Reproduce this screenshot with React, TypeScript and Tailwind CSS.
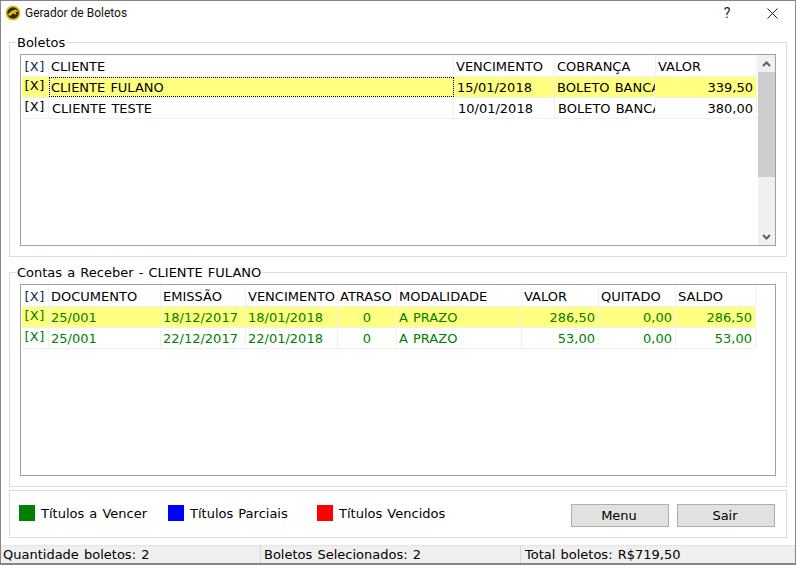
import React from "react";

const boletos = [
  { cliente: "CLIENTE FULANO", venc: "15/01/2018", cob: "BOLETO BANCÁRIO", valor: "339,50", selected: true },
  { cliente: "CLIENTE TESTE", venc: "10/01/2018", cob: "BOLETO BANCÁRIO", valor: "380,00", selected: false },
];

const contas = [
  { doc: "25/001", em: "18/12/2017", venc: "18/01/2018", atraso: "0", mod: "A PRAZO", valor: "286,50", quit: "0,00", saldo: "286,50", selected: true },
  { doc: "25/001", em: "22/12/2017", venc: "22/01/2018", atraso: "0", mod: "A PRAZO", valor: "53,00", quit: "0,00", saldo: "53,00", selected: false },
];

function Cell({ w, right, center, className, children }: any) {
  return (
    <div
      style={{ width: w }}
      className={`shrink-0 h-full overflow-hidden whitespace-nowrap border-r border-[#f0f0f0] ${right ? "text-right pr-[3px]" : center ? "text-center" : "pl-[2px]"} ${className || ""}`}
    >
      {children}
    </div>
  );
}

function Check({ head }: any) {
  return (
    <Cell w={27} center className={`pr-[1px] tracking-[0.4px] ${head ? "text-[#0b2a55]" : "leading-[18px]"}`}>
      [X]
    </Cell>
  );
}

function Group({ title, className, children }: any) {
  return (
    <div className={`relative mx-[8px] border border-[#dcdcdc] ${className}`}>
      {title && (
        <span className="absolute left-[6px] top-[-8px] bg-white px-[1px] leading-[16px] text-black">
          {title}
        </span>
      )}
      {children}
    </div>
  );
}

function Scrollbar() {
  return (
    <div className="ml-[1px] flex w-[17px] shrink-0 flex-col bg-[#f0f0f0]">
      <div className="flex h-[17px] items-center justify-center">
        <svg width="9" height="6" viewBox="0 0 9 6">
          <path d="M1 5 L4.5 1.5 L8 5" fill="none" stroke="#606060" strokeWidth="2" />
        </svg>
      </div>
      <div className="h-[105px] bg-[#cdcdcd]" />
      <div className="flex-1" />
      <div className="flex h-[17px] items-center justify-center">
        <svg width="9" height="6" viewBox="0 0 9 6">
          <path d="M1 1 L4.5 4.5 L8 1" fill="none" stroke="#606060" strokeWidth="2" />
        </svg>
      </div>
    </div>
  );
}

export default function App() {
  return (
    <div className="flex h-[565px] w-[796px] flex-col overflow-hidden border border-b-2 border-[#858585] bg-white font-['DejaVu_Sans','Verdana',sans-serif] text-[13px] leading-[21px] text-[#000] [word-spacing:1px]">
      <div className="flex h-[29px] shrink-0 items-center pb-[5px] font-['Roboto','Noto_Sans',sans-serif] text-[12px] [word-spacing:0px]">
        <svg className="ml-[4px]" width="16" height="16" viewBox="0 0 16 16">
          <circle cx="8" cy="8" r="7.5" fill="#e8b90f" />
          <circle cx="8" cy="8" r="5.8" fill="#2b2b22" />
          <path d="M2.5 9.5 L6.5 6 L10 4.5 L13.5 6 L10.5 7.5 L11.5 10 L8 8.5 L5 11 Z" fill="#e8b90f" />
        </svg>
        <span className="ml-[4px] text-[#111]">Gerador de Boletos</span>
        <span className="ml-auto w-[14px] text-center text-[14px] text-[#222]">?</span>
        <svg className="ml-[33px] mr-[17px]" width="11" height="11" viewBox="0 0 11 11">
          <path d="M0.5 0.5 L10.5 10.5 M10.5 0.5 L0.5 10.5" stroke="#222" strokeWidth="1" />
        </svg>
      </div>

      <Group title="Boletos" className="mt-[12px] h-[215px] shrink-0 px-[10px] pt-[11px]">
        <div className="flex h-[192px] border border-[#a0a0a0] pl-[1px]">
          <div className="flex-1">
            <div className="flex h-[22px] w-fit border-b border-[#f0f0f0] leading-[23px]">
              <Check head />
              <Cell w={405}>CLIENTE</Cell>
              <Cell w={101}>VENCIMENTO</Cell>
              <Cell w={101}>COBRANÇA</Cell>
              <Cell w={101}>VALOR</Cell>
            </div>
            {boletos.map((b) => (
              <div key={b.cliente} className={`flex h-[21px] w-fit border-b border-[#f0f0f0] ${b.selected ? "bg-[#ffff80]" : ""}`}>
                <Check />
                <Cell w={405} className={b.selected ? "outline-1 -outline-offset-1 outline-dotted outline-black" : "pl-[3px]"}>
                  {b.cliente}
                </Cell>
                <Cell w={101} className={b.selected ? "pl-[3px]" : "pl-[4px]"}>{b.venc}</Cell>
                <Cell w={101} className={b.selected ? "" : "pl-[3px]"}>{b.cob}</Cell>
                <Cell w={101} right>{b.valor}</Cell>
              </div>
            ))}
          </div>
          <Scrollbar />
        </div>
      </Group>

      <Group title="Contas a Receber - CLIENTE FULANO" className="mt-[15px] h-[215px] shrink-0 px-[10px] pt-[11px]">
        <div className="h-[192px] border border-[#a0a0a0] pl-[1px]">
          <div className="flex h-[22px] w-fit border-b border-[#f0f0f0] leading-[23px]">
            <Check head />
            <Cell w={112}>DOCUMENTO</Cell>
            <Cell w={85}>EMISSÃO</Cell>
            <Cell w={92}>VENCIMENTO</Cell>
            <Cell w={59}>ATRASO</Cell>
            <Cell w={125}>MODALIDADE</Cell>
            <Cell w={77}>VALOR</Cell>
            <Cell w={77}>QUITADO</Cell>
            <Cell w={80}>SALDO</Cell>
          </div>
          {contas.map((c, i) => (
            <div key={i} className={`flex h-[21px] w-fit border-b border-[#f0f0f0] text-[#008000] ${c.selected ? "bg-[#ffff80]" : ""}`}>
              <Check />
              <Cell w={112}>{c.doc}</Cell>
              <Cell w={85}>{c.em}</Cell>
              <Cell w={92}>{c.venc}</Cell>
              <Cell w={59} center>{c.atraso}</Cell>
              <Cell w={125}>{c.mod}</Cell>
              <Cell w={77} right>{c.valor}</Cell>
              <Cell w={77} right>{c.quit}</Cell>
              <Cell w={80} right>{c.saldo}</Cell>
            </div>
          ))}
        </div>
      </Group>

      <Group className="mt-[3px] flex h-[48px] shrink-0 items-start pl-[9px] pr-[11px] pt-[14px]">
        <div className="h-[16px] w-[16px] bg-[#008000]" />
        <span className="ml-[6px] -mt-[2px] w-[127px]">Títulos a Vencer</span>
        <div className="h-[16px] w-[16px] bg-[#0000ff]" />
        <span className="ml-[6px] -mt-[2px] w-[127px]">Títulos Parciais</span>
        <div className="h-[16px] w-[16px] bg-[#ff0000]" />
        <span className="ml-[6px] -mt-[2px]">Títulos Vencidos</span>
        <div className="ml-auto -mt-[1px] flex gap-[8px]">
          <button className="h-[23px] w-[98px] border border-[#adadad] bg-[#e1e1e1] pb-[2px] pr-[2px]">Menu</button>
          <button className="h-[23px] w-[98px] border border-[#adadad] bg-[#e1e1e1] pb-[2px] pr-[2px]">Sair</button>
        </div>
      </Group>

      <div className="mt-[7px] flex flex-1 items-center border-t border-[#e3e3e3] bg-[#efefef] leading-[18px]">
        <div className="w-[260px] border-r border-[#d8d8d8] pl-[2px]">Quantidade boletos: 2</div>
        <div className="w-[260px] border-r border-[#d8d8d8] pl-[3px]">Boletos Selecionados: 2</div>
        <div className="pl-[4px]">Total boletos: R$719,50</div>
      </div>
    </div>
  );
}
